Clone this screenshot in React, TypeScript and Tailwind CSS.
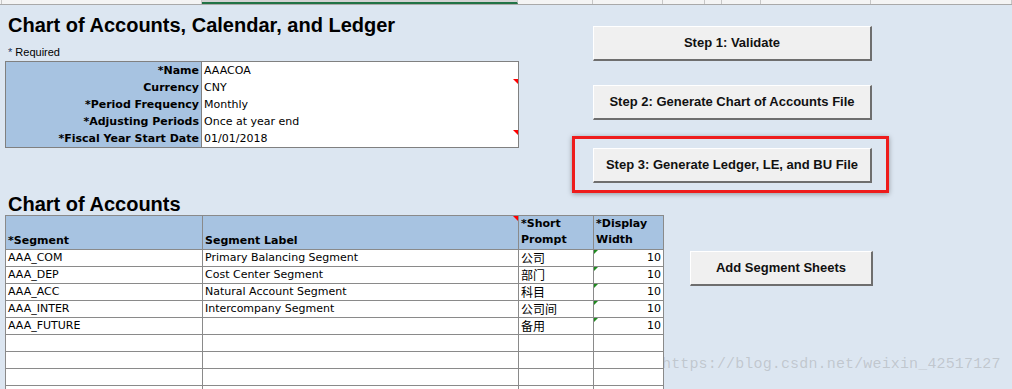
import React from 'react';

const stripCols = [
  { w: 'w-[2px]', sel: false },
  { w: 'w-[200px]', sel: false },
  { w: 'w-[316px]', sel: true },
  { w: 'w-[75px]', sel: false },
  { w: 'w-[70px]', sel: false },
  { w: 'w-[42px]', sel: false },
  { w: 'w-[17px]', sel: false },
  { w: 'w-[39px]', sel: false },
  { w: 'w-[110px]', sel: false },
  { w: 'flex-1', sel: false },
];

const formRows = [
  { label: '*Name', value: 'AAACOA', note: false },
  { label: 'Currency', value: 'CNY', note: true },
  { label: '*Period Frequency', value: 'Monthly', note: false },
  { label: '*Adjusting Periods', value: 'Once at year end', note: false },
  { label: '*Fiscal Year Start Date', value: '01/01/2018', note: true },
];

const segments = [
  { code: 'AAA_COM', label: 'Primary Balancing Segment', prompt: '公司', width: '10' },
  { code: 'AAA_DEP', label: 'Cost Center Segment', prompt: '部门', width: '10' },
  { code: 'AAA_ACC', label: 'Natural Account Segment', prompt: '科目', width: '10' },
  { code: 'AAA_INTER', label: 'Intercompany Segment', prompt: '公司间', width: '10' },
  { code: 'AAA_FUTURE', label: '', prompt: '备用', width: '10' },
  { code: '', label: '', prompt: '', width: '' },
  { code: '', label: '', prompt: '', width: '' },
  { code: '', label: '', prompt: '', width: '' },
  { code: '', label: '', prompt: '', width: '' },
];

function RedNote() {
  return (
    <span className="absolute top-0 right-0 w-0 h-0 border-l-[5px] border-l-transparent border-t-[5px] border-t-[#ff0000]" />
  );
}

function GreenNote() {
  return (
    <span className="absolute top-0 left-0 w-0 h-0 border-r-[4px] border-r-transparent border-t-[4px] border-t-[#1f8a1f]" />
  );
}

function XlButton({ children, className = '' }: { children: React.ReactNode; className?: string }) {
  return (
    <button
      className={
        'relative h-[35px] bg-[#f0f0f0] border-t border-l border-t-white border-l-white border-r-2 border-b-2 border-r-[#6e6e6e] border-b-[#6e6e6e] text-[13px] font-bold text-[#111] ' +
        className
      }
    >
      {children}
    </button>
  );
}

export default function App() {
  return (
    <div className="relative w-[1012px] h-[389px] overflow-hidden bg-[#dce6f1] font-['Liberation_Sans',Arial,sans-serif] text-black">
      {/* column header strip */}
      <div className="flex h-[5px] bg-[#f4f4f4] border-b border-[#a9a9a9]">
        {stripCols.map((c, i) => (
          <div
            key={i}
            className={
              c.w +
              ' border-r border-[#c6c6c6] ' +
              (c.sel ? 'bg-[#d3d3d3] border-b-2 border-b-[#217346]' : '')
            }
          />
        ))}
      </div>

      {/* top section */}
      <div className="flex h-[188px]">
        <div className="w-[519px] pl-[5px]">
          <h1 className="pl-[3px] pt-[8px] text-[20px] leading-[24px] font-bold">
            Chart of Accounts, Calendar, and Ledger
          </h1>
          <div className="pl-[3px] mt-[8px] text-[11px] leading-[14px]">
            <span className="text-[#1f3864]">*</span> Required
          </div>
          <div className="mt-[2px] border border-[#808080] bg-white font-['DejaVu_Sans',sans-serif] text-[11px]">
            {formRows.map((r) => (
              <div key={r.label} className="flex h-[17px] leading-[17px]">
                <div className="w-[196px] bg-[#a7c3e1] border-r border-[#808080] text-right pr-[2px] font-bold">
                  {r.label}
                </div>
                <div className="relative flex-1 pl-[2px]">
                  {r.value}
                  {r.note && <RedNote />}
                </div>
              </div>
            ))}
          </div>
        </div>

        <div className="ml-[74px] pt-[21px] flex flex-col">
          <XlButton className="w-[279px]">Step 1: Validate</XlButton>
          <XlButton className="w-[279px] mt-[24px]">Step 2: Generate Chart of Accounts File</XlButton>
          <XlButton className="w-[279px] mt-[28px]">
            Step 3: Generate Ledger, LE, and BU File
            <span className="absolute -top-[13px] -left-[22px] -right-[19px] -bottom-[12px] border-[3px] border-[#ee1c1c] shadow-[0_1px_5px_rgba(0,0,0,0.35)] pointer-events-none" />
          </XlButton>
        </div>
      </div>

      {/* bottom section */}
      <div className="flex">
        <div className="pl-[5px]">
          <h2 className="pl-[3px] text-[20px] leading-[22px] font-bold">Chart of Accounts</h2>
          <div className="grid grid-cols-[197px_316px_75px_70px] border-l border-t border-[#8a8a8a] text-[11px] font-['DejaVu_Sans',sans-serif]">
            <div className="h-[34px] bg-[#a7c3e1] border-r border-b border-[#8a8a8a] flex items-end pl-[2px] font-bold leading-[17px]">
              *Segment
            </div>
            <div className="relative h-[34px] bg-[#a7c3e1] border-r border-b border-[#8a8a8a] flex items-end pl-[2px] font-bold leading-[17px]">
              Segment Label
              <RedNote />
            </div>
            <div className="h-[34px] bg-[#a7c3e1] border-r border-b border-[#8a8a8a] pl-[2px] font-bold leading-[16px]">
              *Short
              <br />
              Prompt
            </div>
            <div className="h-[34px] bg-[#a7c3e1] border-r border-b border-[#8a8a8a] pl-[2px] font-bold leading-[16px]">
              *Display
              <br />
              Width
            </div>
            {segments.map((s, i) => (
              <React.Fragment key={i}>
                <div className="h-[17px] bg-white border-r border-b border-[#8a8a8a] pl-[2px] leading-[16px]">
                  {s.code}
                </div>
                <div className="h-[17px] bg-white border-r border-b border-[#8a8a8a] pl-[2px] leading-[16px]">
                  {s.label}
                </div>
                <div className="h-[17px] bg-white border-r border-b border-[#8a8a8a] pl-[2px] leading-[16px] text-[12px] font-['Noto_Sans_CJK_SC',sans-serif]">
                  {s.prompt}
                </div>
                <div className="relative h-[17px] bg-white border-r border-b border-[#8a8a8a] pr-[2px] text-right leading-[16px]">
                  {s.width}
                  {s.width && <GreenNote />}
                </div>
              </React.Fragment>
            ))}
          </div>
        </div>

        <div className="ml-[26px] pt-[58px]">
          <XlButton className="w-[183px]">Add Segment Sheets</XlButton>
        </div>
      </div>

      {/* watermark */}
      <div className="absolute left-[662px] top-[354px] text-[15px] leading-[22px] tracking-[0.15px] font-['Liberation_Mono',monospace] text-[rgba(140,140,140,0.35)] pointer-events-none whitespace-nowrap">
        https://blog.csdn.net/weixin_42517127
      </div>
    </div>
  );
}
